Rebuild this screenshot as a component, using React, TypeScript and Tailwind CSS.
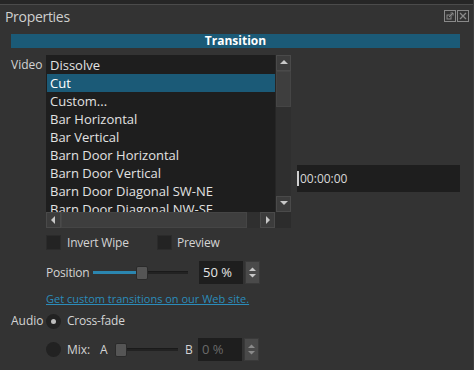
const items = [
  "Dissolve",
  "Cut",
  "Custom...",
  "Bar Horizontal",
  "Bar Vertical",
  "Barn Door Horizontal",
  "Barn Door Vertical",
  "Barn Door Diagonal SW-NE",
  "Barn Door Diagonal NW-SE",
];

function Arrow({ dir }: { dir: "up" | "down" | "left" | "right" }) {
  const pts = {
    up: "1,6 5,2 9,6",
    down: "1,2 5,6 9,2",
    left: "6,1 2,5 6,9",
    right: "3,1 7,5 3,9",
  }[dir];
  return (
    <svg width="10" height="10" viewBox="0 0 10 10">
      <polygon points={pts} fill="#c8c8c8" />
    </svg>
  );
}

function Spin({ value, dim }: { value: string; dim?: boolean }) {
  return (
    <div className="flex items-center gap-[2px]">
      <div
        className={`w-[44px] h-[23px] bg-[#1e1e1e] flex items-center pl-[4px] text-[13px] ${
          dim ? "text-[#6a6a6a]" : "text-[#e6e6e6]"
        }`}
      >
        {value}
      </div>
      <div className="w-[15px] h-[23px] bg-[#4a4a4a] border border-[#3a3a3a] flex flex-col items-center justify-center">
        <svg width="9" height="13" viewBox="0 0 9 13">
          <polygon points="1,5 4.5,1.5 8,5" fill={dim ? "#8a8a8a" : "#c8c8c8"} />
          <polygon points="1,8 4.5,11.5 8,8" fill={dim ? "#8a8a8a" : "#c8c8c8"} />
        </svg>
      </div>
    </div>
  );
}

function Slider({ width, fill }: { width: number; fill: number }) {
  return (
    <div className="relative h-[14px] flex items-center" style={{ width }}>
      <div className="w-full h-[3px] bg-[#222] border-t border-[#1a1a1a]" />
      <div className="absolute left-0 top-[5px] h-[3px] bg-[#2b86b0]" style={{ width: fill }} />
      <div
        className="absolute top-0 w-[12px] h-[14px] bg-[#555] border border-[#2a2a2a] rounded-[2px]"
        style={{ left: fill - 2 }}
      />
    </div>
  );
}

export default function App() {
  return (
    <div
      className="w-[474px] h-[370px] bg-[#333333] overflow-hidden text-[#d4d4d4] border-r border-[#3e3e3e]"
      style={{ fontFamily: '"Open Sans", "Noto Sans", sans-serif' }}
    >
      <div className="h-[5px] bg-[#262626] border-b border-[#4b4b4b]" />

      {/* header */}
      <div className="h-[22px] flex items-center justify-between pl-[5px] pr-[4px]">
        <span className="text-[14px] text-[#cfcfcf] tracking-[-0.3px]">Properties</span>
        <div className="flex gap-[1px]">
          <svg width="12" height="12" viewBox="0 0 12 12">
            <rect x="0.5" y="0.5" width="11" height="11" fill="none" stroke="#8a8a8a" />
            <rect x="3" y="5" width="4" height="4" fill="none" stroke="#8a8a8a" />
            <path d="M5 7 L9 3 M6.5 3 H9 V5.5" fill="none" stroke="#8a8a8a" />
          </svg>
          <svg width="12" height="12" viewBox="0 0 12 12">
            <rect x="0.5" y="0.5" width="11" height="11" fill="none" stroke="#8a8a8a" />
            <path d="M3 3 L9 9 M9 3 L3 9" stroke="#8a8a8a" strokeWidth="1.3" />
          </svg>
        </div>
      </div>

      {/* section bar */}
      <div className="mt-[7px] ml-[11px] w-[449px] h-[14px] bg-[#1b5a77] flex items-center justify-center">
        <span className="text-[12px] font-bold text-white leading-none">Transition</span>
      </div>

      {/* video row */}
      <div className="flex mt-[7px]">
        <div className="w-[46px] pl-[11px] text-[12px] leading-[18px] pt-[1px]">Video</div>
        <div className="w-[245px] h-[173px] flex flex-col bg-[#2c2c2c]">
          <div className="flex h-[157px]">
            <div className="w-[229px] bg-[#1e1e1e] pt-[1px] pl-[1px] overflow-hidden">
              {items.map((it, i) => (
                <div
                  key={it}
                  className={`h-[18px] leading-[18px] pl-[3px] text-[13px] whitespace-nowrap ${
                    i === 1 ? "bg-[#1b5a77] text-white" : "text-[#e2e2e2]"
                  }`}
                >
                  {it}
                </div>
              ))}
            </div>
            <div className="w-[16px] flex flex-col bg-[#2f2f2f] border-l border-[#262626]">
              <div className="h-[16px] bg-[#3c3c3c] border border-[#4a4a4a] flex items-center justify-center">
                <Arrow dir="up" />
              </div>
              <div className="h-[36px] bg-[#3e3e3e] border border-[#454545]" />
              <div className="flex-1" />
              <div className="h-[16px] bg-[#3c3c3c] border border-[#4a4a4a] flex items-center justify-center">
                <Arrow dir="down" />
              </div>
            </div>
          </div>
          <div className="flex h-[16px] bg-[#2f2f2f]">
            <div className="w-[15px] bg-[#3c3c3c] border border-[#4a4a4a] flex items-center justify-center">
              <Arrow dir="left" />
            </div>
            <div className="w-[186px] bg-[#3e3e3e] border border-[#454545]" />
            <div className="flex-1" />
            <div className="w-[15px] bg-[#3c3c3c] border border-[#4a4a4a] flex items-center justify-center">
              <Arrow dir="right" />
            </div>
            <div className="w-[16px] bg-[#2c2c2c]" />
          </div>
        </div>
        <div className="ml-[6px] mt-[110px] w-[163px] h-[27px] bg-[#1e1e1e] flex items-center text-[12px] text-[#d8d8d8]">
          <span className="w-[2px] h-[15px] bg-[#cfcfcf] mr-[1px]" />
          00:00:00
        </div>
      </div>

      {/* checkboxes */}
      <div className="flex items-center mt-[7px] pl-[46px] h-[15px] text-[12px] tracking-[-0.2px]">
        <div className="w-[15px] h-[15px] bg-[#232323] border border-[#2b2b2b]" />
        <span className="ml-[6px] w-[90px]">Invert Wipe</span>
        <div className="w-[15px] h-[15px] bg-[#232323] border border-[#2b2b2b]" />
        <span className="ml-[5px]">Preview</span>
      </div>

      {/* position */}
      <div className="flex items-center mt-[11px] pl-[46px] h-[23px] text-[12px]">
        <span className="w-[47px] tracking-[-0.2px]">Position</span>
        <Slider width={95} fill={45} />
        <div className="ml-[11px]">
          <Spin value="50 %" />
        </div>
      </div>

      <div className="mt-[7px] pl-[46px] text-[11px] text-[#2b8cba] underline leading-[16px]">
        Get custom transitions on our Web site.
      </div>

      {/* audio */}
      <div className="flex items-center mt-[6px] h-[16px] text-[12px]">
        <span className="w-[46px] pl-[11px]">Audio</span>
        <div className="w-[15px] h-[15px] rounded-full bg-[#222] flex items-center justify-center">
          <div className="w-[5px] h-[5px] rounded-full bg-[#bdbdbd]" />
        </div>
        <span className="ml-[6px] tracking-[-0.2px]">Cross-fade</span>
      </div>

      <div className="flex items-center mt-[9px] pl-[46px] h-[23px] text-[12px]">
        <div className="w-[15px] h-[15px] rounded-full bg-[#222]" />
        <span className="ml-[6px] w-[33px]">Mix:</span>
        <span className="w-[15px]">A</span>
        <Slider width={63} fill={2} />
        <span className="ml-[7px] w-[13px]">B</span>
        <Spin value="0 %" dim />
      </div>
    </div>
  );
}
